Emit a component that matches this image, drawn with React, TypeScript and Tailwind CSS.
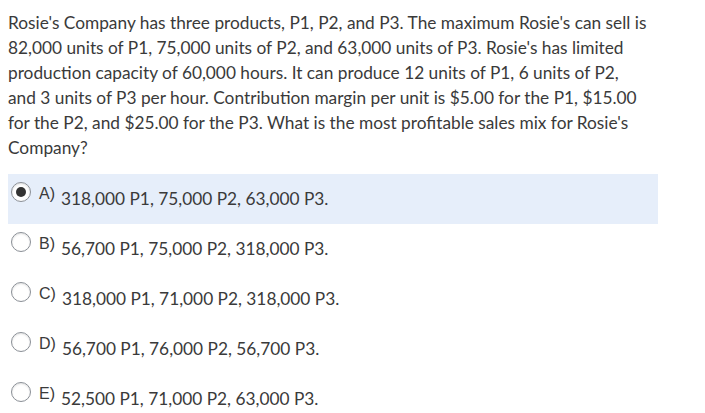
import React from 'react';

const lines = [
  "Rosie's Company has three products, P1, P2, and P3. The maximum Rosie's can sell is",
  "82,000 units of P1, 75,000 units of P2, and 63,000 units of P3. Rosie's has limited",
  "production capacity of 60,000 hours. It can produce 12 units of P1, 6 units of P2,",
  "and 3 units of P3 per hour. Contribution margin per unit is $5.00 for the P1, $15.00",
  "for the P2, and $25.00 for the P3. What is the most profitable sales mix for Rosie's",
  "Company?",
];

const options = [
  { key: 'A', text: '318,000 P1, 75,000 P2, 63,000 P3.', selected: true },
  { key: 'B', text: '56,700 P1, 75,000 P2, 318,000 P3.' },
  { key: 'C', text: '318,000 P1, 71,000 P2, 318,000 P3.' },
  { key: 'D', text: '56,700 P1, 76,000 P2, 56,700 P3.' },
  { key: 'E', text: '52,500 P1, 71,000 P2, 63,000 P3.' },
];

function Radio({ checked }: { checked?: boolean }) {
  return (
    <span className="flex h-[20px] w-[20px] shrink-0 items-center justify-center rounded-full border border-[#8a8f96] bg-white shadow-[inset_0_1px_2px_rgba(0,0,0,0.12)]">
      {checked && <span className="h-[10px] w-[10px] rounded-full bg-[#333]" />}
    </span>
  );
}

export default function App() {
  return (
    <div className="h-[413px] w-[705px] bg-white font-['Lato',sans-serif] text-[#3a3a3a]">
      <div className="pl-2 pt-[10px] text-[17.3px] leading-[25px]">
        {lines.map((l, i) => (
          <div key={i}>{l}</div>
        ))}
      </div>
      <div className="mt-[14px] w-[650px] pl-2 box-content">
        {options.map((o) => (
          <div
            key={o.key}
            className={`flex h-[50px] items-start pl-[3px] pt-[8px] ${o.selected ? 'bg-[#e6eefa]' : ''}`}
          >
            <Radio checked={o.selected} />
            <span className="ml-[8px] mt-[4px] font-['Liberation_Sans',Arial,sans-serif] text-[16px] leading-[16px]">
              {o.key})
            </span>
            <span className="ml-[6px] mt-[8px] text-[17.3px] leading-[18px]">{o.text}</span>
          </div>
        ))}
      </div>
    </div>
  );
}
